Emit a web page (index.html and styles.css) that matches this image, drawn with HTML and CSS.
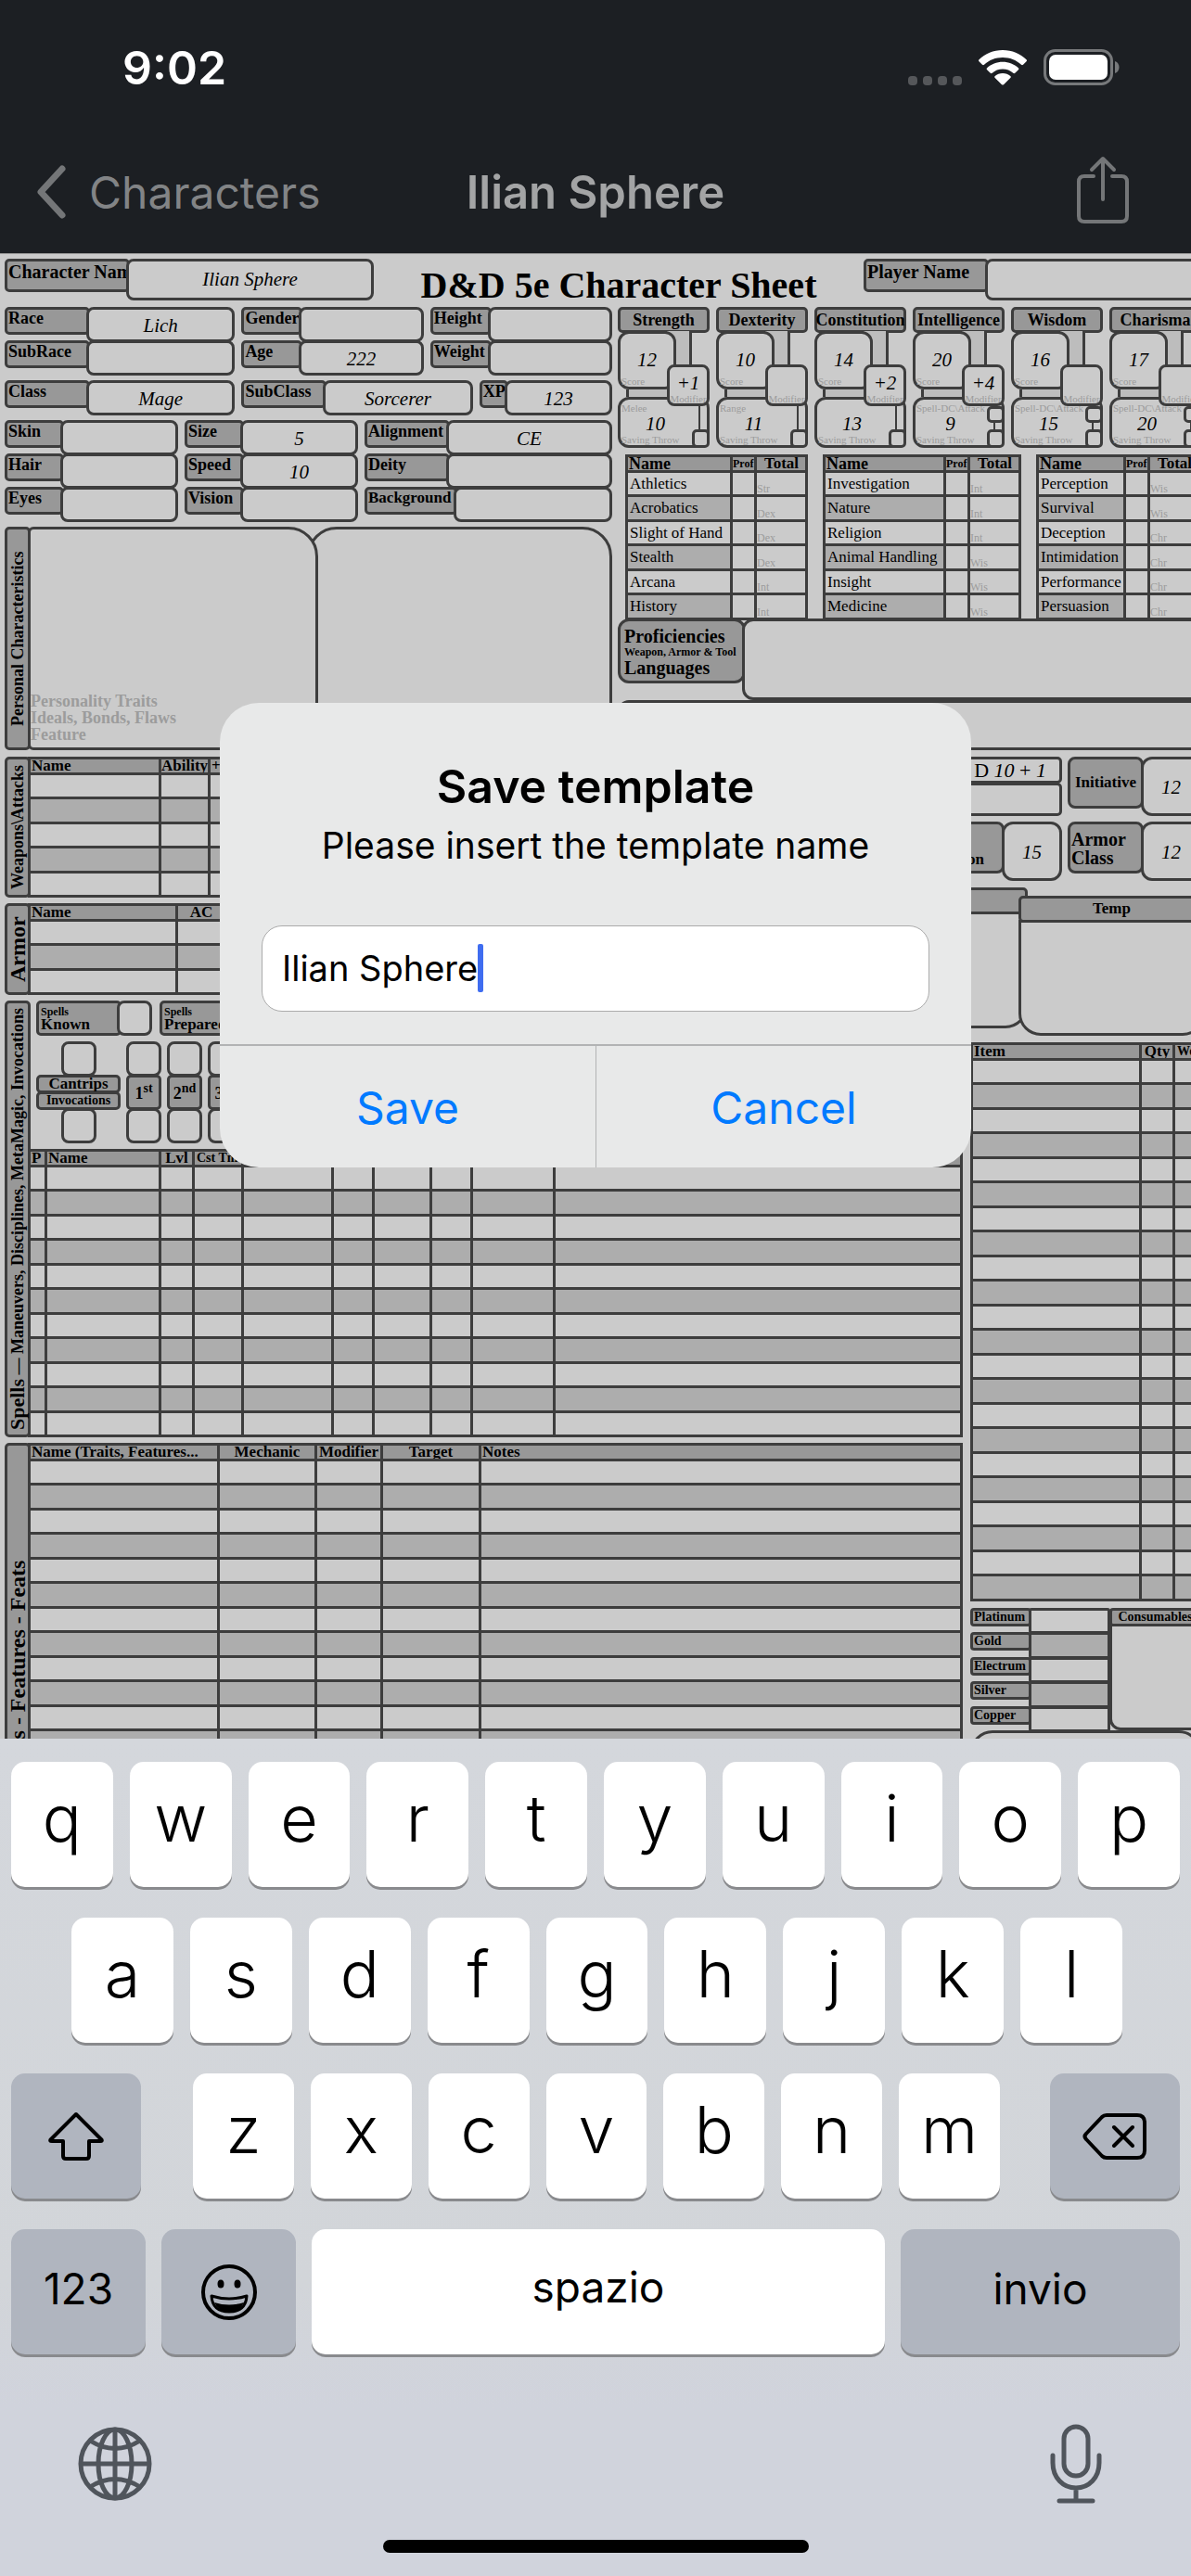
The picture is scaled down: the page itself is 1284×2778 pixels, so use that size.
FILE: index.html
```html
<!DOCTYPE html>
<html lang="en">
<head>
<meta charset="utf-8">
<meta name="viewport" content="width=device-width">
<title>Ilian Sphere</title>
<link rel="stylesheet" href="styles.css">
</head>
<body>
<div class="workspace">
  <header class="top">
    <div class="status">
      <time class="clock">9:02</time>
      <div class="indicators">
        <span class="dots"><i></i><i></i><i></i><i></i></span>
        <svg width="52" height="38" viewBox="0 0 52 38" fill="#fff"><path d="M26 0C36 0 45 4 51.500 10.200Q52.500 11.200 51.500 12.200L48 15.700Q47 16.600 46 15.700C40.500 10.700 33.600 8 26 8S11.500 10.700 6 15.700Q5 16.600 4 15.700L.5 12.200Q-.5 11.200.5 10.200C7 4 16 0 26 0ZM26 12.700C32.500 12.700 38.400 15.100 42.900 19.200Q43.900 20.200 42.900 21.200L39.300 24.700Q38.300 25.600 37.300 24.700C34.200 22 30.300 20.500 26 20.500S17.800 22 14.700 24.700Q13.700 25.600 12.700 24.700L9.100 21.200Q8.100 20.200 9.100 19.200C13.600 15.100 19.500 12.700 26 12.700ZM26 25C29.200 25 32.100 26.200 34.300 28.100Q35.300 29.100 34.300 30.100L27 37.200Q26 38 25 37.200L17.700 30.100Q16.700 29.100 17.700 28.100C19.900 26.200 22.800 25 26 25Z"/></svg>
        <svg width="83" height="39" viewBox="0 0 83 39"><rect x="1.500" y="1.500" width="72" height="36" rx="11" fill="none" stroke="#77797b" stroke-width="3"/><rect x="6" y="6" width="63" height="27" rx="7" fill="#fff"/><path d="M77 13c6 2 6 11 0 13z" fill="#77797b"/></svg>
      </div>
    </div>
    <nav class="nav">
      <a class="back" href="#characters"><svg width="34" height="60" viewBox="0 0 34 60" fill="none" stroke="#747678" stroke-width="7" stroke-linecap="round" stroke-linejoin="round"><path d="M29 5 6 30l23 25"/></svg>Characters</a>
      <h1>Ilian Sphere</h1>
      <button class="share" aria-label="Share"><svg width="58" height="74" viewBox="0 0 58 74" fill="none" stroke="#747678" stroke-width="4" stroke-linecap="round" stroke-linejoin="round"><path d="M19 22H9q-6 0-6 6v37q0 6 6 6h40q6 0 6-6V28q0-6-6-6H39M29 47V4M17 15 29 3l12 12"/></svg></button>
    </nav>
  </header>

  <main class="sheet">
    <div class="page">
      <div class="headline">
        <div class="field big"><label for="cn">Character Name</label><input id="cn" value="Ilian Sphere"></div>
        <h2>D&amp;D 5e Character Sheet</h2>
        <div class="field big"><label for="pn">Player Name</label><input id="pn"></div>
      </div>

      <div class="upper">
        <section class="bio">
          <div class="grid3 race">
            <div class="field wide"><label for="race">Race</label><input id="race" value="Lich"></div>
            <div class="field"><label for="gender">Gender</label><input id="gender"></div>
            <div class="field"><label for="height">Height</label><input id="height"></div>
            <div class="field wide"><label for="sub">SubRace</label><input id="sub"></div>
            <div class="field"><label for="age">Age</label><input id="age" value="222"></div>
            <div class="field"><label for="weight">Weight</label><input id="weight"></div>
          </div>
          <div class="grid3 class">
            <div class="field wide"><label for="class">Class</label><input id="class" value="Mage"></div>
            <div class="field wide"><label for="subclass">SubClass</label><input id="subclass" value="Sorcerer"></div>
            <div class="field tiny"><label for="xp">XP</label><input id="xp" value="123"></div>
          </div>
          <div class="grid3 looks">
            <div class="field"><label for="skin">Skin</label><input id="skin"></div>
            <div class="field"><label for="size">Size</label><input id="size" value="5"></div>
            <div class="field wide"><label for="al">Alignment</label><input id="al" value="CE"></div>
            <div class="field"><label for="hair">Hair</label><input id="hair"></div>
            <div class="field"><label for="speed">Speed</label><input id="speed" value="10"></div>
            <div class="field wide"><label for="deity">Deity</label><input id="deity"></div>
            <div class="field"><label for="eyes">Eyes</label><input id="eyes"></div>
            <div class="field"><label for="vision">Vision</label><input id="vision"></div>
            <div class="field back-ground"><label for="bg">Background</label><input id="bg"></div>
          </div>
          <div class="personal">
            <h3 class="side"><span>Personal Characteristics</span></h3>
            <div class="box traits"><p>Personality Traits<br>Ideals, Bonds, Flaws<br>Feature</p></div>
            <div class="box portrait"></div>
          </div>
        </section>

        <section class="stats">
          <div class="abilities">
            <div class="ability"><h3>Strength</h3><div class="card">
              <i class="link-a"></i><i class="link-b"></i><i class="link-c"></i>
              <div class="score"><b>12</b><small>Score</small></div>
              <div class="save"><small>Melee</small><b>10</b><small>Saving Throw</small></div>
              <div class="mod"><b>+1</b><small>Modifier</small></div>
              <input type="checkbox" class="tick" aria-label="Strength save"></div></div>
            <div class="ability"><h3>Dexterity</h3><div class="card">
              <i class="link-a"></i><i class="link-b"></i><i class="link-c"></i>
              <div class="score"><b>10</b><small>Score</small></div>
              <div class="save"><small>Range</small><b>11</b><small>Saving Throw</small></div>
              <div class="mod"><b></b><small>Modifier</small></div>
              <input type="checkbox" class="tick" aria-label="Dexterity save"></div></div>
            <div class="ability"><h3>Constitution</h3><div class="card">
              <i class="link-a"></i><i class="link-b"></i><i class="link-c"></i>
              <div class="score"><b>14</b><small>Score</small></div>
              <div class="save"><small></small><b>13</b><small>Saving Throw</small></div>
              <div class="mod"><b>+2</b><small>Modifier</small></div>
              <input type="checkbox" class="tick" aria-label="Constitution save"></div></div>
            <div class="ability caster"><h3>Intelligence</h3><div class="card">
              <i class="link-a"></i><i class="link-b"></i><i class="link-c"></i>
              <div class="score"><b>20</b><small>Score</small></div>
              <div class="save"><small>Spell-DC\Attack</small><b>9</b><small>Saving Throw</small></div>
              <div class="mod"><b>+4</b><small>Modifier</small></div>
              <input type="checkbox" class="tick cast" aria-label="Intelligence casting"><input type="checkbox" class="tick" aria-label="Intelligence save"></div></div>
            <div class="ability caster"><h3>Wisdom</h3><div class="card">
              <i class="link-a"></i><i class="link-b"></i><i class="link-c"></i>
              <div class="score"><b>16</b><small>Score</small></div>
              <div class="save"><small>Spell-DC\Attack</small><b>15</b><small>Saving Throw</small></div>
              <div class="mod"><b></b><small>Modifier</small></div>
              <input type="checkbox" class="tick cast" aria-label="Wisdom casting"><input type="checkbox" class="tick" aria-label="Wisdom save"></div></div>
            <div class="ability caster"><h3>Charisma</h3><div class="card">
              <i class="link-a"></i><i class="link-b"></i><i class="link-c"></i>
              <div class="score"><b>17</b><small>Score</small></div>
              <div class="save"><small>Spell-DC\Attack</small><b>20</b><small>Saving Throw</small></div>
              <div class="mod"><b></b><small>Modifier</small></div>
              <input type="checkbox" class="tick cast" aria-label="Charisma casting"><input type="checkbox" class="tick" aria-label="Charisma save"></div></div>
          </div>

          <div class="skills">
            <table class="grid skill">
              <colgroup><col><col class="c26"><col class="c55"></colgroup>
              <thead><tr><th>Name</th><th>Prof</th><th>Total</th></tr></thead>
              <tbody>
                <tr><td>Athletics</td><td></td><td>Str</td></tr>
                <tr><td>Acrobatics</td><td></td><td>Dex</td></tr>
                <tr><td>Slight of Hand</td><td></td><td>Dex</td></tr>
                <tr><td>Stealth</td><td></td><td>Dex</td></tr>
                <tr><td>Arcana</td><td></td><td>Int</td></tr>
                <tr><td>History</td><td></td><td>Int</td></tr>
              </tbody>
            </table>
            <table class="grid skill">
              <colgroup><col><col class="c26"><col class="c55"></colgroup>
              <thead><tr><th>Name</th><th>Prof</th><th>Total</th></tr></thead>
              <tbody>
                <tr><td>Investigation</td><td></td><td>Int</td></tr>
                <tr><td>Nature</td><td></td><td>Int</td></tr>
                <tr><td>Religion</td><td></td><td>Int</td></tr>
                <tr><td>Animal Handling</td><td></td><td>Wis</td></tr>
                <tr><td>Insight</td><td></td><td>Wis</td></tr>
                <tr><td>Medicine</td><td></td><td>Wis</td></tr>
              </tbody>
            </table>
            <table class="grid skill">
              <colgroup><col><col class="c26"><col class="c55"></colgroup>
              <thead><tr><th>Name</th><th>Prof</th><th>Total</th></tr></thead>
              <tbody>
                <tr><td>Perception</td><td></td><td>Wis</td></tr>
                <tr><td>Survival</td><td></td><td>Wis</td></tr>
                <tr><td>Deception</td><td></td><td>Chr</td></tr>
                <tr><td>Intimidation</td><td></td><td>Chr</td></tr>
                <tr><td>Performance</td><td></td><td>Chr</td></tr>
                <tr><td>Persuasion</td><td></td><td>Chr</td></tr>
              </tbody>
            </table>
          </div>

          <div class="profs">
            <h3>Proficiencies<small>Weapon, Armor &amp; Tool</small>Languages</h3>
            <div class="box"></div>
          </div>
          <div class="box spare"></div>
        </section>
      </div>

      <div class="lower">
        <div class="lists">
          <section class="listing">
            <h3 class="side"><span>Weapons\Attacks</span></h3>
            <table class="grid">
              <colgroup><col class="c141"><col class="c53"><col></colgroup>
              <thead><tr><th>Name</th><th class="mid">Ability</th><th>+</th></tr></thead>
              <tbody data-rows="5"></tbody>
            </table>
          </section>
          <section class="listing">
            <h3 class="side large"><span>Armor</span></h3>
            <table class="grid">
              <colgroup><col class="c159"><col class="c53"><col></colgroup>
              <thead><tr><th>Name</th><th class="mid">AC</th><th></th></tr></thead>
              <tbody data-rows="3"></tbody>
            </table>
          </section>
          <section class="listing">
            <h3 class="side"><span><b>Spells</b> — Maneuvers, Disciplines, MetaMagic, Invocations</span></h3>
            <div class="magic">
              <div class="counts">
                <div class="count"><label for="known"><small>Spells</small>Known</label><input id="known"></div>
                <div class="count"><label for="prep"><small>Spells</small>Prepared</label><input id="prep"></div>
              </div>
              <div class="slots">
                <div class="slot cantrips"><i></i><span>Cantrips</span><span class="less">Invocations</span><i></i></div>
                <div class="slot"><i></i><span>1<sup>st</sup></span><i></i></div>
                <div class="slot"><i></i><span>2<sup>nd</sup></span><i></i></div>
                <div class="slot"><i></i><span>3<sup>rd</sup></span><i></i></div>
              </div>
              <table class="grid">
                <colgroup><col class="c18"><col class="c123"><col class="c36"><col class="c53"><col class="c97"><col class="c44"><col class="c62"><col class="c44"><col class="c89"><col></colgroup>
                <thead><tr><th>P</th><th>Name</th><th class="mid">Lvl</th><th class="fine">Cst Tm</th><th></th><th></th><th></th><th></th><th></th><th></th></tr></thead>
                <tbody data-rows="11"></tbody>
              </table>
            </div>
          </section>
          <section class="listing">
            <h3 class="side large"><span>Traits - Features - Feats</span></h3>
            <table class="grid">
              <colgroup><col class="c204"><col class="c105"><col class="c71"><col class="c106"><col></colgroup>
              <thead><tr><th>Name (Traits, Features...</th><th class="mid">Mechanic</th><th class="mid">Modifier</th><th class="mid">Target</th><th>Notes</th></tr></thead>
              <tbody data-rows="18"></tbody>
            </table>
          </section>
        </div>

        <div class="gear">
          <div class="combat">
            <div class="dice"><div>D <i>10</i> + <i>1</i></div><div></div></div>
            <div class="duo"><label for="init" class="mid">Initiative</label><input id="init" value="12"></div>
            <div class="duo"><label for="pp">Passive<br>Perception</label><input id="pp" value="15"></div>
            <div class="duo"><label for="ac" class="armor">Armor<br>Class</label><input id="ac" value="12"></div>
          </div>
          <div class="health">
            <div class="pool"><h3></h3><div></div></div>
            <div class="pool temp"><h3>Temp</h3><div></div></div>
          </div>
          <table class="grid items">
            <colgroup><col><col class="c36"><col class="c28"></colgroup>
            <thead><tr><th>Item</th><th class="mid">Qty</th><th class="fine">Wei</th></tr></thead>
            <tbody data-rows="22"></tbody>
          </table>
          <div class="purse">
            <div class="coins">
              <div class="coin"><label for="pt">Platinum</label><input id="pt"></div>
              <div class="coin"><label for="gd">Gold</label><input id="gd"></div>
              <div class="coin"><label for="el">Electrum</label><input id="el"></div>
              <div class="coin"><label for="sv">Silver</label><input id="sv"></div>
              <div class="coin"><label for="cp">Copper</label><input id="cp"></div>
            </div>
            <div class="consumables"><h3>Consumables</h3><div></div></div>
          </div>
          <div class="box notes"></div>
        </div>
      </div>
    </div>
  </main>

  <div class="overlay">
    <form class="alert" role="dialog" aria-labelledby="at">
      <h2 id="at">Save template</h2>
      <label for="tn">Please insert the template name</label>
      <div class="textbox"><input id="tn" value="Ilian Sphere"><i class="caret"></i></div>
      <div class="actions"><button type="button">Save</button><button type="button">Cancel</button></div>
    </form>
  </div>
</div>

<footer class="keyboard">
  <div class="keys r1"><button>q</button><button>w</button><button>e</button><button>r</button><button>t</button><button>y</button><button>u</button><button>i</button><button>o</button><button>p</button></div>
  <div class="keys r2"><button>a</button><button>s</button><button>d</button><button>f</button><button>g</button><button>h</button><button>j</button><button>k</button><button>l</button></div>
  <div class="keys r3">
    <button class="mod-key" aria-label="Shift"><svg width="60" height="54" viewBox="0 0 60 54" fill="none" stroke="#000" stroke-width="4" stroke-linejoin="round"><path d="M30 3 57 30q2 2-1 2H44v16q0 3-3 3H19q-3 0-3-3V32H4q-3 0-1-2Z"/></svg></button>
    <div class="keys r3-mid"><button>z</button><button>x</button><button>c</button><button>v</button><button>b</button><button>n</button><button>m</button></div>
    <button class="mod-key" aria-label="Delete"><svg width="70" height="52" viewBox="0 0 70 52" fill="none" stroke="#000" stroke-width="4" stroke-linecap="round" stroke-linejoin="round"><path d="M26 3h33q8 0 8 8v30q0 8-8 8H26q-3 0-5-2L4 29q-3-3 0-6L21 5q2-2 5-2ZM34 16l20 20M54 16 34 36"/></svg></button>
  </div>
  <div class="keys r4">
    <button class="mod-key word">123</button>
    <button class="mod-key" aria-label="Emoji"><svg width="62" height="62" viewBox="0 0 62 62"><circle cx="31" cy="31" r="28" fill="none" stroke="#000" stroke-width="4"/><ellipse cx="22" cy="22" rx="3.500" ry="4.500"/><ellipse cx="40" cy="22" rx="3.500" ry="4.500"/><path d="M12 35q19 6 38 0-1 17-19 17T12 35Z" fill="none" stroke="#000" stroke-width="3" stroke-linejoin="round"/><path d="M15 42q16 5 32 0-4 10-16 10T15 42Z"/></svg></button>
    <button class="word">spazio</button>
    <button class="mod-key word">invio</button>
  </div>
  <div class="tools">
    <button aria-label="Next keyboard"><svg width="80" height="80" viewBox="0 0 80 80" fill="none" stroke="#50555c" stroke-width="5"><circle cx="40" cy="40" r="37"/><ellipse cx="40" cy="40" rx="18" ry="37"/><path d="M40 2v76M2 40h76M13 15q27 17 54 0M13 65q27-17 54 0"/></svg></button>
    <button aria-label="Dictate"><svg width="56" height="86" viewBox="0 0 56 86" fill="none" stroke="#50555c" stroke-width="5" stroke-linecap="round"><rect x="15" y="3" width="26" height="53" rx="13"/><path d="M3 34v8c0 16 11 27 25 27s25-11 25-27v-8M28 69v14M10 83h36"/></svg></button>
  </div>
  <div class="home"></div>
</footer>
<script src="script.js"></script>
</body>
</html>
```
FILE: script.js
```js
// Fill each list body with its number of blank rows.
document.querySelectorAll("tbody[data-rows]").forEach(function (body) {
  var cells = body.parentNode.querySelectorAll("th").length;
  for (var r = 0; r < Number(body.dataset.rows); r++) {
    var row = body.insertRow();
    for (var c = 0; c < cells; c++) row.insertCell();
  }
});
```
FILE: styles.css
```css
:root {
  --line: #3d3d3d;
  --paper: #cbcbcb;
  --head: #989898;
  --band: #adadad;
  --hint: #9c9c9c;
}
* { box-sizing: border-box; }
body {
  margin: 0;
  height: 100vh;
  display: flex;
  flex-direction: column;
  overflow: hidden;
  background: #d2d5db;
  color: #000;
  font-family: Inter, "Liberation Sans", sans-serif;
}
h1, h2, h3, p { margin: 0; }
button { border: 0; padding: 0; background: none; font: inherit; color: inherit; }
svg { display: block; }

.workspace {
  flex: 1;
  min-height: 0;
  position: relative;
  display: flex;
  flex-direction: column;
}

/* status and navigation bars */
.top { flex: none; background: #1c1f23; color: #fff; border-bottom: 1px solid #999; }
.status {
  height: 141px;
  padding: 4px 76px 0 132px;
  display: flex;
  justify-content: space-between;
  align-items: center;
}
.clock { font-size: 50px; font-weight: 600; }
.indicators { display: flex; align-items: center; gap: 18px; }
.dots { display: flex; gap: 6px; align-self: flex-end; }
.dots i { width: 10px; height: 10px; border-radius: 4px; background: #55575a; }
.nav {
  height: 132px;
  padding: 0 38px;
  display: grid;
  grid-template-columns: 1fr auto 1fr;
  align-items: center;
  font-size: 48px;
}
.nav h1 { font-size: 49px; font-weight: 600; color: #a3a4a5; }
.back { display: flex; align-items: center; gap: 24px; color: #828486; text-decoration: none; }
.share { justify-self: end; margin: 0 28px 4px 0; }

/* character sheet */
.sheet {
  flex: 1;
  min-height: 0;
  overflow: hidden;
  background: var(--paper);
  font-family: "Liberation Serif", serif;
}
.page { padding: 5px 0 0 5px; margin-right: -11px; }
.sheet input {
  appearance: none;
  margin: 0;
  min-width: 0;
  padding: 3px 0 0;
  border: 3px solid var(--line);
  border-radius: 8px;
  background: var(--paper);
  font: italic 21px "Liberation Serif", serif;
  text-align: center;
}
.box { border: 3px solid var(--line); border-radius: 12px; background: var(--paper); }

.headline { display: grid; grid-template-columns: 398fr 528fr 364fr; height: 52px; }
.headline h2 { font-size: 40px; line-height: 58px; text-align: center; white-space: nowrap; }

.field { display: flex; height: 36px; min-width: 0; }
.field label {
  flex: none;
  width: 66px;
  height: 30px;
  overflow: hidden;
  white-space: nowrap;
  padding-left: 1px;
  border: 3px solid var(--line);
  border-radius: 5px;
  background: var(--head);
  font-weight: bold;
  font-size: 18px;
  line-height: 18px;
}
.sheet .field input { position: relative; flex: 1; width: 0; height: 38px; margin-left: -4px; }
.field.wide label { width: 92px; }
.field.tiny label { width: 31px; }
.looks .field label { width: 64px; }
.looks .wide label { width: 92px; }
.looks .back-ground label { width: 100px; font-size: 17px; }
.field.big label { width: 135px; height: 36px; font-size: 20px; line-height: 22px; }
.sheet .field.big input { height: 45px; padding: 0; }

.upper { display: grid; grid-template-columns: 655fr 629fr; gap: 6px; height: 485px; padding-bottom: 7px; }
.bio { min-width: 0; display: flex; flex-direction: column; gap: 7px; }
.grid3 { display: grid; column-gap: 7px; }
.race { grid-template-columns: 248fr 196fr 196fr; }
.class { grid-template-columns: 248fr 249fr 143fr; }
.looks { grid-template-columns: 187fr 187fr 267fr; }

.side {
  flex: none;
  width: 28px;
  display: flex;
  align-items: center;
  justify-content: center;
  border: 3px solid var(--line);
  border-radius: 5px;
  background: var(--head);
  writing-mode: vertical-rl;
  transform: rotate(180deg);
  font-size: 18px;
  line-height: 22px;
  white-space: nowrap;
}
.side.large { font-size: 24px; }
.side b { font-size: 22px; }
.personal { flex: 1; display: flex; }
.personal .traits {
  position: relative;
  flex: 311;
  margin-left: -3px;
  display: flex;
  align-items: flex-end;
  border-radius: 6px 32px 6px 6px;
  font-weight: bold;
  font-size: 18px;
  line-height: 18px;
  color: var(--hint);
}
.traits p { padding-bottom: 5px; }
.personal .portrait { flex: 328; margin-left: -12px; border-radius: 32px; }

.stats { min-width: 0; display: flex; flex-direction: column; }
.abilities { display: grid; grid-template-columns: repeat(6, minmax(0, 1fr)); gap: 7px; margin-bottom: 7px; }
.ability h3 {
  height: 28px;
  border: 3px solid var(--line);
  border-radius: 5px;
  background: var(--head);
  font-size: 18px;
  line-height: 23px;
  display: flex;
  justify-content: center;
  white-space: nowrap;
}
.card {
  display: grid;
  margin-top: -2px;
  grid-template-columns: 9px 44px 10px 1fr 9px 10px;
  grid-template-rows: 36px 27px 8px 10px 18px 7px 20px;
  color: var(--hint);
}
.card b { font: italic 21px/22px "Liberation Serif", serif; color: #000; text-align: center; min-height: 22px; }
.card small { font-size: 11px; line-height: 12px; font-weight: normal; white-space: nowrap; }
.score, .save, .mod {
  min-width: 0;
  min-height: 0;
  display: flex;
  flex-direction: column;
  border: 3px solid var(--line);
  border-radius: 12px;
  background: var(--paper);
}
.score { grid-area: 1 / 1 / 3 / 4; padding: 17px 1px 0; justify-content: space-between; }
.save { grid-area: 4 / 1 / 8 / 7; padding: 0 1px; justify-content: flex-end; }
.save b { padding-right: 18px; }
.save small { min-height: 12px; }
.mod { grid-area: 2 / 3 / 5 / 7; z-index: 1; border-radius: 8px; padding-top: 6px; justify-content: space-between; }
.mod small { text-align: center; }
.link-a { grid-area: 1 / 3 / 2 / 5; background: #bdbdbd; border-right: 3px solid var(--line); }
.link-b { grid-area: 3 / 2 / 4 / 4; background: #bdbdbd; border-left: 3px solid var(--line); }
.link-c { grid-area: 5 / 5 / 7 / 6; z-index: 1; border-right: 2px solid var(--line); }
.sheet .tick { grid-area: 7 / 5 / 8 / 7; z-index: 2; border-radius: 5px; }
.sheet .tick.cast { grid-area: 5 / 5 / 6 / 7; }

.grid { border-collapse: collapse; table-layout: fixed; width: 100%; background: var(--paper); }
.grid th, .grid td { border: 3px solid var(--line); padding: 0; overflow: hidden; white-space: nowrap; text-align: left; }
.grid th { height: 17px; padding-left: 1px; background: var(--head); font-size: 17px; line-height: 14px; }
.grid .mid, .mid { padding: 0; text-align: center; }
.grid .fine { font-size: 14px; padding-left: 2px; }
.grid tbody tr { height: 26px; }
.grid tbody tr:nth-child(even) { height: 27px; background: var(--band); }
.c18 { width: 18px; } .c26 { width: 26px; } .c28 { width: 28px; } .c36 { width: 36px; }
.c44 { width: 44px; } .c53 { width: 53px; } .c55 { width: 55px; } .c62 { width: 62px; }
.c71 { width: 71px; } .c89 { width: 89px; } .c97 { width: 97px; } .c105 { width: 105px; }
.c106 { width: 106px; } .c123 { width: 123px; } .c141 { width: 141px; } .c159 { width: 159px; }
.c204 { width: 204px; }

.skills { display: grid; grid-template-columns: 197fr 214fr 178fr; gap: 16px; padding-left: 8px; align-items: start; }
.skill td { font-size: 17px; line-height: 20px; }
.skill td:first-child { padding-left: 2px; }
.skill td + td { background: var(--paper); }
.skill td:last-child { font-size: 12px; line-height: 12px; vertical-align: bottom; color: var(--hint); }
.grid.skill th:nth-child(2) { padding: 0; font-size: 12px; }
.grid.skill th:first-child { font-size: 18px; }
.skill th:last-child { text-align: center; }

.profs { display: flex; height: 88px; margin-top: -2px; }
.profs h3 {
  width: 138px;
  height: 70px;
  padding: 6px 0 0 4px;
  border: 3px solid var(--line);
  border-radius: 12px;
  background: var(--head);
  font-size: 20px;
  line-height: 20px;
}
.profs small { display: block; font-size: 12px; line-height: 14px; }
.profs .box { flex: 1; margin-left: -4px; }
.spare { flex: 1; margin-right: -30px; }

.lower { display: grid; grid-template-columns: 1033fr 249fr; gap: 8px; align-items: start; }
.lists { min-width: 0; display: flex; flex-direction: column; gap: 6px; }
.listing { display: flex; }
.listing > .grid, .magic { flex: 1; width: 0; margin-left: -3px; }
.counts { display: flex; gap: 8px; padding-left: 9px; height: 44px; }
.count { display: flex; width: 125px; height: 38px; }
.count label {
  flex: none;
  width: 92px;
  padding: 3px 0 0 2px;
  border: 3px solid var(--line);
  border-radius: 5px;
  background: var(--head);
  font-weight: bold;
  font-size: 17px;
  line-height: 15px;
}
.count small { display: block; font-size: 12px; line-height: 12px; }
.count input { width: 38px; margin-left: -5px; }
.slots { display: flex; gap: 6px; padding-left: 9px; height: 116px; }
.slot { width: 38px; display: flex; flex-direction: column; align-items: center; }
.slot i, .slot span { width: 38px; height: 38px; margin-bottom: -2px; border: 3px solid var(--line); border-radius: 8px; }
.slot span { border-radius: 5px; background: var(--head); font-weight: bold; font-size: 18px; line-height: 34px; text-align: center; }
.slot sup { font-size: 14px; line-height: 10px; }
.slot.cantrips { width: 91px; }
.slot.cantrips span { width: 91px; height: 20px; font-size: 17px; line-height: 14px; }
.slot.cantrips .less { font-size: 14px; line-height: 14px; }

.gear { min-width: 0; display: flex; flex-direction: column; gap: 7px; }
.combat, .health { position: relative; margin-left: -70px; display: grid; }
.combat { grid-template-columns: 169fr 144fr; gap: 6px; }
.duo { display: flex; min-width: 0; height: 64px; }
.duo label {
  flex: 1;
  height: 56px;
  padding: 9px 0 0 4px;
  border: 3px solid var(--line);
  border-radius: 8px;
  background: var(--head);
  font-weight: bold;
  font-size: 17px;
  line-height: 19px;
}
.duo .mid { padding: 15px 0 0; }
.duo .armor { padding: 6px 0 0 1px; font-size: 20px; line-height: 20px; }
.duo input { width: 65px; margin-left: -3px; border-radius: 12px; }
.dice div { height: 36px; border: 3px solid var(--line); border-radius: 5px; }
.dice div:first-child { height: 29px; margin-bottom: -1px; padding-right: 14px; font-size: 22px; line-height: 24px; text-align: right; }
.health { grid-template-columns: 131fr 196fr; height: 160px; }
.pool { display: flex; flex-direction: column; padding-bottom: 8px; margin-right: -4px; }
.pool.temp { padding: 9px 0 0; margin-left: -6px; z-index: 1; }
.pool h3 { height: 29px; border: 3px solid var(--line); border-radius: 5px; background: var(--head); font-size: 17px; line-height: 22px; text-align: center; }
.pool div { flex: 1; margin-top: -3px; border: 3px solid var(--line); border-radius: 0 0 24px 24px; background: var(--paper); }
.items { position: relative; }

.purse { display: grid; grid-template-columns: 151fr 99fr; }
.coins, .consumables { min-width: 0; }
.coin { display: flex; height: 26px; }
.coin:nth-child(even) { height: 27px; }
.coin label {
  flex: none;
  width: 66px;
  height: 20px;
  padding-left: 1px;
  border: 3px solid var(--line);
  border-radius: 4px;
  background: var(--head);
  font-weight: bold;
  font-size: 14px;
  line-height: 13px;
}
.sheet .coin input { flex: 1; width: 0; margin: 0 -1px -2px -3px; border-radius: 3px; }
.sheet .coin:nth-child(even) input { background: var(--band); }
.consumables { display: flex; flex-direction: column; white-space: nowrap; }
.consumables h3 { height: 20px; padding-left: 6px; border: 3px solid var(--line); border-radius: 4px; background: var(--head); font-size: 14px; line-height: 13px; overflow: hidden; }
.consumables div { flex: 1; margin-top: -3px; border: 3px solid var(--line); border-radius: 0 0 12px 12px; }
.notes { height: 160px; margin-top: -7px; border-radius: 24px; }

/* alert */
.overlay {
  position: absolute;
  inset: 141px 0 0;
  z-index: 5;
  display: flex;
  align-items: center;
  justify-content: center;
}
.alert {
  width: 810px;
  max-width: 90%;
  border-radius: 42px;
  background: #e8e9e9;
  text-align: center;
  display: flex;
  flex-direction: column;
  overflow: hidden;
}
.alert h2 { margin-top: 59px; font-size: 50px; line-height: 62px; font-weight: 600; }
.alert label { font-size: 39px; line-height: 66px; }
.textbox {
  margin: 53px 45px 35px;
  height: 93px;
  padding-left: 21px;
  display: flex;
  align-items: center;
  border: 1px solid #ababab;
  border-radius: 22px;
  background: #fff;
}
.textbox input { field-sizing: content; min-width: 0; border: 0; padding: 0; outline: 0; background: none; color: #000; font: 38px Inter, sans-serif; }
.caret { width: 6px; height: 52px; border-radius: 2px; background: #3f6df0; }
.actions { display: grid; grid-template-columns: 1fr 1fr; border-top: 2px solid #b2b3b4; }
.actions button { height: 131px; color: #007aff; font-size: 48px; padding-top: 3px; }
.actions button + button { border-left: 1px solid #b2b3b4; }

/* keyboard */
.keyboard {
  flex: none;
  padding: 25px 12px;
  display: flex;
  flex-direction: column;
  gap: 33px;
  background: linear-gradient(#d4d7dc, #d2d5d9 65%, #d0d3dc 80%);
}
.keys { display: grid; gap: 18px; }
.keys button {
  height: 135px;
  padding-bottom: 15px;
  display: flex;
  align-items: center;
  justify-content: center;
  border-radius: 15px;
  background: #fff;
  box-shadow: 0 3px #898a8d;
  font-size: 70px;
  font-weight: 300;
}
.r1 { grid-template-columns: repeat(10, 1fr); }
.r2 { grid-template-columns: repeat(9, 1fr); padding: 0 62px 0 65px; }
.r3 { grid-template-columns: 140px 1fr 140px; gap: 54px; }
.r3-mid { grid-template-columns: repeat(7, 1fr); padding-left: 2px; }
.r4 { grid-template-columns: 145px 145px 1fr 301px; gap: 17px; }
.keys .mod-key { padding: 0; background: #b0b5bf; }
.keys .word { font-size: 46px; font-weight: 400; padding-bottom: 12px; }
.keys .mod-key.word { padding-bottom: 8px; }
.tools { display: flex; justify-content: space-between; align-items: center; padding: 42px 84px 0 72px; }
.home { width: 459px; height: 14px; border-radius: 7px; background: #000; margin: 6px auto 0; }
```
